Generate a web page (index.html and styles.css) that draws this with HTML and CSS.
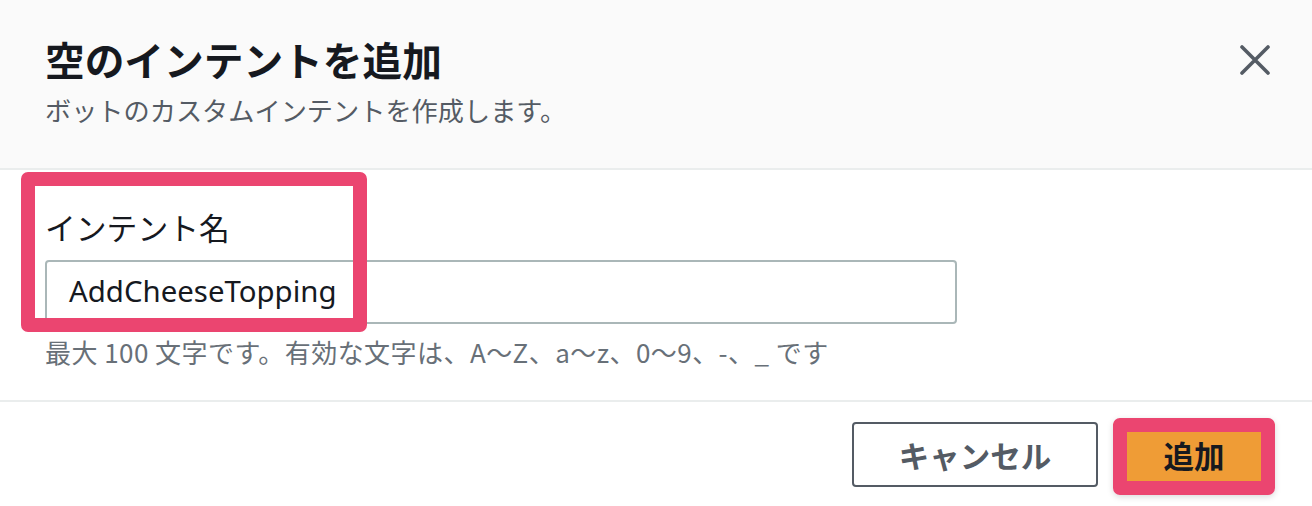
FILE: index.html
```html
<!DOCTYPE html>
<html lang="ja">
<head>
<meta charset="utf-8">
<title>空のインテントを追加</title>
<link rel="stylesheet" href="styles.css">
</head>
<body>
<div class="modal">
  <header class="modal-header">
    <div class="titles">
      <h2 class="title">空のインテントを追加</h2>
      <p class="subtitle">ボットのカスタムインテントを作成します。</p>
    </div>
    <button class="close" aria-label="閉じる">
      <svg width="30" height="30" viewBox="0 0 30 30"><path d="M2 2 L28 28 M28 2 L2 28" stroke="#545b64" stroke-width="3.6" stroke-linecap="round" fill="none"/></svg>
    </button>
  </header>
  <section class="modal-body">
    <label class="label" for="intent">インテント名</label>
    <div class="input">AddCheeseTopping</div>
    <p class="help">最大 100 文字です。有効な文字は、A〜Z、a〜z、0〜9、-、_ です</p>
    <div class="highlight highlight-field"></div>
  </section>
  <footer class="modal-footer">
    <button class="btn btn-cancel">キャンセル</button>
    <div class="primary-wrap">
      <button class="btn btn-primary">追加</button>
      <div class="highlight highlight-btn"></div>
    </div>
  </footer>
</div>
</body>
</html>
```
FILE: styles.css
```css
* { box-sizing: border-box; }
html, body { margin: 0; padding: 0; background: #ffffff; }
body {
  font-family: "Noto Sans", "Noto Sans CJK JP", sans-serif;
  color: #16191f;
  width: 1312px;
  height: 506px;
  overflow: hidden;
}
.modal { width: 1312px; }
.modal-header {
  height: 170px;
  background: #fafafa;
  border-bottom: 2px solid #eaeded;
  display: flex;
  justify-content: space-between;
  align-items: flex-start;
  padding: 33px 42px 0 45px;
}
.title {
  margin: 0;
  font-family: "Noto Sans CJK JP", sans-serif;
  font-weight: 700;
  font-size: 39.7px;
  line-height: 52px;
  color: #16191f;
}
.subtitle {
  margin: 8px 0 0;
  font-family: "Noto Sans CJK JP", sans-serif;
  font-size: 26.2px;
  line-height: 34px;
  color: #545b64;
}
.close {
  border: 0;
  background: none;
  padding: 0;
  margin-top: 12px;
  width: 30px;
  height: 30px;
  display: block;
}
.close svg { display: block; }
.modal-body {
  position: relative;
  padding: 37px 45px 0;
  height: 232px;
  border-bottom: 2px solid #eaeded;
}
.label {
  display: block;
  font-family: "Noto Sans CJK JP", sans-serif;
  font-size: 30.8px;
  line-height: 40px;
  color: #16191f;
}
.input {
  margin-top: 13px;
  width: 912px;
  height: 64px;
  border: 2px solid #aab7b8;
  border-radius: 4px;
  padding: 0 22px;
  font-family: "Noto Sans", sans-serif;
  font-size: 29.4px;
  line-height: 58px;
  color: #16191f;
  background: #fff;
}
.help {
  margin: 11px 0 0;
  font-family: "Noto Sans CJK JP", sans-serif;
  font-size: 26px;
  letter-spacing: 0.45px;
  line-height: 34px;
  color: #687078;
}
.highlight {
  position: absolute;
  border: 14px solid #eb4570;
  border-radius: 7px;
  pointer-events: none;
}
.highlight-field {
  left: 21px;
  top: 2px;
  width: 346px;
  height: 160px;
}
.modal-footer {
  display: flex;
  justify-content: flex-end;
  align-items: flex-start;
  gap: 15px;
  padding: 20px 37px 0 0;
}
.btn {
  font-family: "Noto Sans CJK JP", sans-serif;
  font-weight: 700;
  font-size: 30.5px;
  height: 65px;
  border-radius: 4px;
  cursor: pointer;
}
.btn-cancel {
  width: 246px;
  background: #fff;
  border: 2px solid #545b64;
  color: #545b64;
}
.primary-wrap { position: relative; }
.btn-primary {
  display: block;
  width: 162px;
  background: #ef9c36;
  border: 2px solid #ec7211;
  color: #16191f;
}
.highlight-btn {
  left: 0;
  top: -4px;
  width: 162px;
  height: 77px;
  box-shadow: 0 2px 6px rgba(0,0,0,0.15);
}
```
